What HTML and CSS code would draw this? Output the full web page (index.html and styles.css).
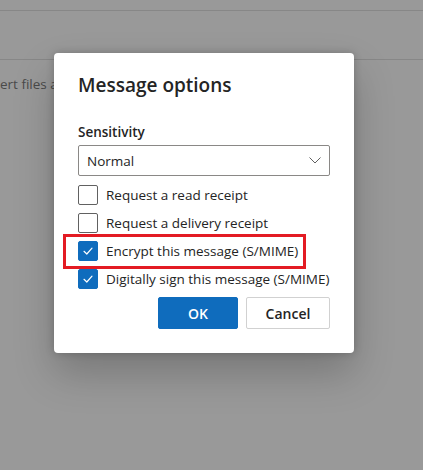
FILE: index.html
```html
<!DOCTYPE html>
<html>
<head>
<meta charset="utf-8">
<link rel="stylesheet" href="styles.css">
</head>
<body>
<div class="page">
  <div class="topbar"></div>
  <div class="toolbar"></div>
  <div class="bodytext">ert files a</div>
</div>
<div class="dialog">
  <h1 class="title">Message options</h1>
  <div class="label">Sensitivity</div>
  <div class="select">
    <span>Normal</span>
    <svg class="chev" width="12" height="7" viewBox="0 0 12 7"><path d="M0.5 0.5 L6 6 L11.5 0.5" fill="none" stroke="#616161" stroke-width="1"/></svg>
  </div>
  <div class="row"><span class="box"></span><span>Request a read receipt</span></div>
  <div class="row"><span class="box"></span><span>Request a delivery receipt</span></div>
  <div class="row"><span class="box on"><svg width="12" height="12" viewBox="0 0 12 12"><path d="M2 6.3 L4.8 9 L10 3.2" fill="none" stroke="#fff" stroke-width="1.2" stroke-linecap="round" stroke-linejoin="round"/></svg></span><span>Encrypt this message (S/MIME)</span></div>
  <div class="row"><span class="box on"><svg width="12" height="12" viewBox="0 0 12 12"><path d="M2 6.3 L4.8 9 L10 3.2" fill="none" stroke="#fff" stroke-width="1.2" stroke-linecap="round" stroke-linejoin="round"/></svg></span><span>Digitally sign this message (S/MIME)</span></div>
  <div class="footer">
    <button class="btn primary">OK</button>
    <button class="btn secondary">Cancel</button>
  </div>
  <div class="highlight"></div>
</div>
</body>
</html>
```
FILE: styles.css
```css
html, body {
  margin: 0;
  padding: 0;
}
body {
  width: 423px;
  height: 470px;
  background: #999999;
  font-family: "Open Sans", "Noto Sans", sans-serif;
  color: #242424;
  overflow: hidden;
  position: relative;
}
.page {
  display: flex;
  flex-direction: column;
}
.topbar {
  height: 10px;
  border-bottom: 1px solid #878787;
}
.toolbar {
  height: 48px;
  border-bottom: 1px solid #878787;
}
.bodytext {
  margin-top: 14px;
  width: 54px;
  overflow: hidden;
  font-size: 13.5px;
  line-height: 20px;
  color: #4a4a4a;
  white-space: nowrap;
}
.dialog {
  position: absolute;
  left: 54px;
  top: 53px;
  width: 300px;
  height: 300px;
  box-sizing: border-box;
  background: #fff;
  border-radius: 4px;
  box-shadow: 0 0 8px rgba(0,0,0,0.2), 0 20px 40px rgba(0,0,0,0.22);
  padding: 18px 24px 24px 24px;
  display: flex;
  flex-direction: column;
}
.title {
  margin: 0;
  font-size: 19px;
  line-height: 28px;
  font-weight: 600;
  color: #242424;
}
.label {
  margin-top: 23px;
  font-size: 13.5px;
  line-height: 20px;
  font-weight: 600;
}
.select {
  margin-top: 3px;
  height: 31px;
  box-sizing: border-box;
  border: 1px solid #8a8886;
  border-radius: 2px;
  display: flex;
  align-items: center;
  justify-content: space-between;
  padding: 0 8px 0 8px;
  font-size: 13.5px;
}
.chev {
  display: block;
}
.row {
  margin-top: 5px;
  height: 28px;
  display: flex;
  align-items: center;
  gap: 8px;
  font-size: 13.5px;
  white-space: nowrap;
}
.row + .row {
  margin-top: 0;
}
.box {
  width: 20px;
  height: 20px;
  box-sizing: border-box;
  border: 1px solid #616161;
  border-radius: 2px;
  display: flex;
  align-items: center;
  justify-content: center;
  flex: none;
}
.box.on {
  background: #0f6cbd;
  border-color: #0f6cbd;
}
.box svg {
  display: block;
}
.footer {
  margin-top: 4px;
  display: flex;
  justify-content: flex-end;
  gap: 8px;
}
.btn {
  height: 32px;
  width: 80px;
  padding: 0;
  box-sizing: border-box;
  border: 1px solid #d1d1d1;
  border-radius: 2px;
  background: #fff;
  font-family: inherit;
  font-size: 14px;
  font-weight: 600;
  color: #242424;
}
.btn.secondary {
  width: 84px;
}
.btn.primary {
  background: #0f6cbd;
  border-color: #0f6cbd;
  color: #fff;
}
.highlight {
  position: absolute;
  left: 9px;
  top: 181px;
  width: 243px;
  height: 35px;
  box-sizing: border-box;
  border: 3px solid #e31b23;
}
```
